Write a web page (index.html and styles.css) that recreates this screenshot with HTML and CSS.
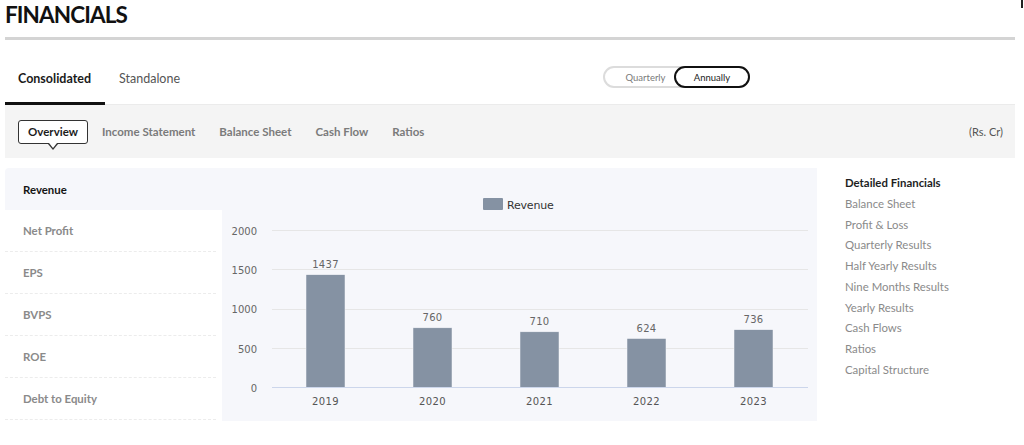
FILE: index.html
```html
<!DOCTYPE html>
<html lang="en">
<head>
<meta charset="utf-8">
<title>Financials</title>
<link rel="stylesheet" href="styles.css">
</head>
<body>
<span class="edge-mark"></span>
<div class="page">
  <header class="head">
    <h1 class="title">FINANCIALS</h1>
  </header>

  <div class="tabrow">
    <div class="tab tab-active">Consolidated</div>
    <div class="tab">Standalone</div>
    <div class="toggle">
      <span class="toggle-opt">Quarterly</span>
      <span class="toggle-opt toggle-on">Annually</span>
    </div>
  </div>

  <nav class="subnav">
    <span class="sub sub-active">Overview</span>
    <span class="sub">Income Statement</span>
    <span class="sub">Balance Sheet</span>
    <span class="sub">Cash Flow</span>
    <span class="sub">Ratios</span>
    <span class="unit">(Rs. Cr)</span>
  </nav>

  <section class="main">
    <ul class="metrics">
      <li class="metric metric-active">Revenue</li>
      <li class="metric">Net Profit</li>
      <li class="metric">EPS</li>
      <li class="metric">BVPS</li>
      <li class="metric">ROE</li>
      <li class="metric">Debt to Equity</li>
    </ul>

    <div class="chart">
      <svg class="chart-svg" width="595" height="253" viewBox="0 0 595 253">
        <rect x="261" y="30" width="20" height="12" rx="1" fill="#8592a3"/>
        <text class="legend" x="285" y="40.5">Revenue</text>

        <line class="grid" x1="50" x2="586" y1="62.5" y2="62.5"/>
        <line class="grid" x1="50" x2="586" y1="101.5" y2="101.5"/>
        <line class="grid" x1="50" x2="586" y1="141.5" y2="141.5"/>
        <line class="grid" x1="50" x2="586" y1="180.5" y2="180.5"/>

        <text class="ylab" x="35" y="66.5">2000</text>
        <text class="ylab" x="35" y="105.5">1500</text>
        <text class="ylab" x="35" y="145">1000</text>
        <text class="ylab" x="35" y="184.5">500</text>
        <text class="ylab" x="35" y="223.5">0</text>

        <rect class="bar" x="84" y="106.7" width="39" height="112.8"/>
        <rect class="bar" x="191" y="159.8" width="39" height="59.7"/>
        <rect class="bar" x="298" y="163.8" width="39" height="55.7"/>
        <rect class="bar" x="405" y="170.5" width="39" height="49"/>
        <rect class="bar" x="512" y="161.7" width="39" height="57.8"/>

        <line class="axis" x1="50" x2="586" y1="219.5" y2="219.5"/>

        <text class="val" x="103.5" y="100">1437</text>
        <text class="val" x="210.5" y="152.5">760</text>
        <text class="val" x="317.5" y="156.5">710</text>
        <text class="val" x="424.5" y="163.5">624</text>
        <text class="val" x="531.5" y="154.5">736</text>

        <text class="xlab" x="103.5" y="237">2019</text>
        <text class="xlab" x="210.5" y="237">2020</text>
        <text class="xlab" x="317.5" y="237">2021</text>
        <text class="xlab" x="424.5" y="237">2022</text>
        <text class="xlab" x="531.5" y="237">2023</text>
      </svg>
    </div>

    <aside class="detail">
      <div class="detail-head">Detailed Financials</div>
      <a class="detail-link">Balance Sheet</a>
      <a class="detail-link">Profit &amp; Loss</a>
      <a class="detail-link">Quarterly Results</a>
      <a class="detail-link">Half Yearly Results</a>
      <a class="detail-link">Nine Months Results</a>
      <a class="detail-link">Yearly Results</a>
      <a class="detail-link">Cash Flows</a>
      <a class="detail-link">Ratios</a>
      <a class="detail-link">Capital Structure</a>
    </aside>
  </section>
</div>
</body>
</html>
```

FILE: styles.css
```css
* { box-sizing: border-box; }

html, body {
  margin: 0;
  padding: 0;
  background: #ffffff;
}

body {
  font-family: Lato, "Open Sans", "Liberation Sans", sans-serif;
  color: #222;
  width: 1024px;
  height: 445px;
  overflow: hidden;
  position: relative;
}

.edge-mark {
  position: absolute;
  top: 0;
  right: 1px;
  width: 2px;
  height: 8px;
  background: #222;
}

.page {
  width: 1015px;
  padding-left: 5px;
}

/* header */
.head {
  padding-top: 1px;
  padding-bottom: 8px;
  border-bottom: 3px solid #d4d4d4;
}

.title {
  margin: 0;
  font-size: 22.5px;
  line-height: 28px;
  font-weight: 700;
  color: #111;
  letter-spacing: -0.9px;
}

/* consolidated / standalone */
.tabrow {
  display: flex;
  align-items: flex-start;
  height: 65px;
  border-bottom: 1px solid #ebebeb;
}

.tab {
  height: 65px;
  padding: 32px 14px 0 14px;
  font-size: 12.5px;
  line-height: 14px;
  color: #555;
}

.tab-active {
  width: 100px;
  padding-left: 13px;
  font-weight: 700;
  color: #1a1a1a;
  border-bottom: 3px solid #111;
}

.toggle {
  display: flex;
  margin-left: auto;
  margin-right: 265px;
  margin-top: 26px;
  width: 147px;
  height: 22px;
  border: 2px solid #dcdcdc;
  border-radius: 11px;
}

.toggle-opt {
  flex: 1;
  display: flex;
  align-items: center;
  justify-content: center;
  font-size: 9.5px;
  color: #7a7a7a;
  padding-left: 12px;
}

.toggle-on {
  flex: 0 0 76px;
  margin: -2px -2px -2px 0;
  padding-left: 0;
  border: 2px solid #111;
  border-radius: 11px;
  color: #222;
  background: #fff;
}

/* sub navigation */
.subnav {
  display: flex;
  align-items: center;
  gap: 4px;
  height: 53px;
  padding-left: 13px;
  padding-right: 12px;
  background: #f4f4f4;
}

.sub {
  padding: 0 10px;
  font-size: 11.5px;
  font-weight: 700;
  color: #7b7b7b;
  line-height: 22px;
}

.sub-active {
  position: relative;
  width: 70px;
  height: 24px;
  padding: 0 8px;
  line-height: 22px;
  text-align: center;
  color: #1c1c1c;
  background: #fff;
  border: 1px solid #333;
  border-radius: 3px;
}

.sub-active::before,
.sub-active::after {
  content: "";
  position: absolute;
  left: 50%;
  width: 0;
  height: 0;
  border-style: solid;
  border-color: transparent;
}

.sub-active::before {
  top: 23px;
  margin-left: -5px;
  border-width: 6px 5px 0 5px;
  border-top-color: #333;
}

.sub-active::after {
  top: 22px;
  margin-left: -4px;
  border-width: 5px 4px 0 4px;
  border-top-color: #fff;
}

.unit {
  margin-left: auto;
  font-size: 11px;
  color: #555;
}

/* main */
.main {
  display: flex;
  margin-top: 10px;
}

.metrics {
  list-style: none;
  margin: 0;
  padding: 0;
  width: 217px;
  flex: 0 0 217px;
}

.metric {
  height: 42px;
  display: flex;
  align-items: center;
  padding-left: 18px;
  margin-right: 6px;
  font-size: 11.4px;
  font-weight: 700;
  color: #8a8a8a;
  border-bottom: 1px dashed #ececec;
}

.metric-active {
  margin-right: 0;
  color: #141414;
  background: #f6f7fb;
  border-bottom: none;
  border-radius: 4px 0 0 0;
}

.chart {
  width: 595px;
  flex: 0 0 595px;
  height: 253px;
  background: #f6f7fb;
}

.chart-svg {
  display: block;
  font-family: "DejaVu Sans", Verdana, sans-serif;
}

.legend {
  font-size: 11px;
  fill: #333;
  letter-spacing: -0.2px;
}

.grid {
  stroke: #e6e6e6;
  stroke-width: 1;
}

.axis {
  stroke: #ccd6eb;
  stroke-width: 1;
}

.bar {
  fill: #8592a3;
  stroke: #f6f7fb;
  stroke-width: 0.5;
}

.ylab {
  font-size: 10px;
  fill: #666;
  text-anchor: end;
}

.val {
  font-size: 10px;
  fill: #666;
  text-anchor: middle;
  letter-spacing: 0.3px;
}

.xlab {
  font-size: 10px;
  fill: #555;
  text-anchor: middle;
  letter-spacing: 0.4px;
}

.detail {
  display: flex;
  flex-direction: column;
  margin-left: 28px;
  padding-top: 5px;
}

.detail-head {
  font-size: 11.4px;
  font-weight: 700;
  line-height: 20.75px;
  color: #1e1e1e;
}

.detail-link {
  font-size: 11.4px;
  line-height: 20.75px;
  color: #8a8a8a;
}
```
